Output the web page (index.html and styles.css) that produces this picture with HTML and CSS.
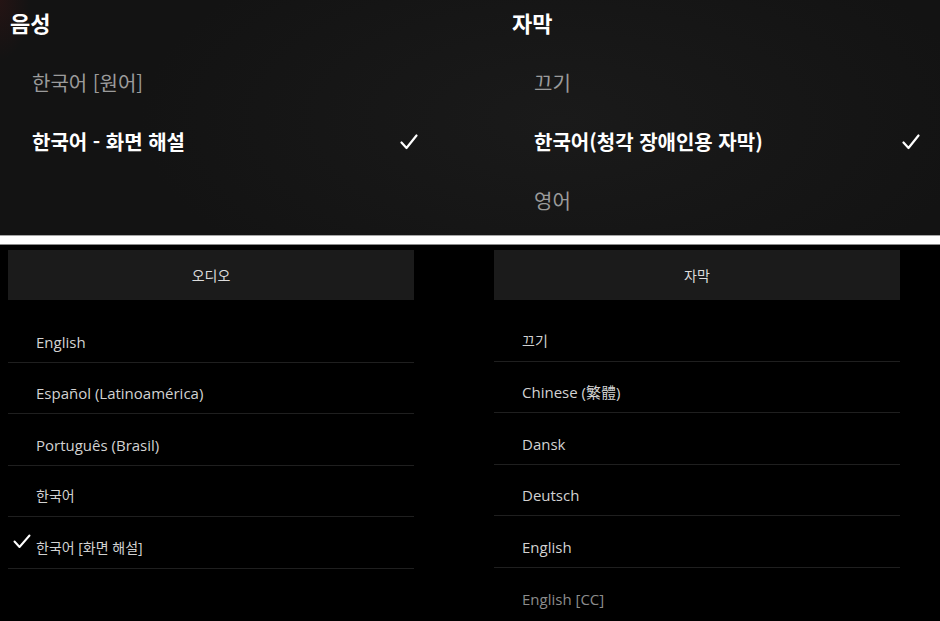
FILE: index.html
```html
<!DOCTYPE html>
<html lang="ko">
<head>
	<meta charset="UTF-8">
	<title>음성 / 자막</title>
	<link rel="stylesheet" href="styles.css">
</head>
<body>
	<section class="player">
		<div class="player_col">
			<h2>음성</h2>
			<ul>
				<li class="dim">한국어 [원어]</li>
				<li class="on">한국어 - 화면 해설
					<svg class="tick" width="18" height="16" viewBox="0 0 18 16"><path d="M1.5 8.5 L6.5 14 L16.5 1.5" fill="none" stroke="#fff" stroke-width="2.2" stroke-linecap="round" stroke-linejoin="round"/></svg>
				</li>
			</ul>
		</div>
		<div class="player_col">
			<h2>자막</h2>
			<ul>
				<li class="dim">끄기</li>
				<li class="on">한국어(청각 장애인용 자막)
					<svg class="tick" width="18" height="16" viewBox="0 0 18 16"><path d="M1.5 8.5 L6.5 14 L16.5 1.5" fill="none" stroke="#fff" stroke-width="2.2" stroke-linecap="round" stroke-linejoin="round"/></svg>
				</li>
				<li class="dim">영어</li>
			</ul>
		</div>
	</section>

	<div class="divider"></div>

	<section class="menu">
		<div class="panel">
			<div class="panel_head"><span class="ko">오디오</span></div>
			<ul>
				<li>English</li>
				<li>Español (Latinoamérica)</li>
				<li>Português (Brasil)</li>
				<li><span class="ko">한국어</span></li>
				<li class="sel">
					<svg class="mark" width="18" height="15" viewBox="0 0 18 15"><path d="M1.5 7.5 L6.5 13 L16.5 1.5" fill="none" stroke="#fff" stroke-width="2" stroke-linecap="round" stroke-linejoin="round"/></svg>
					<span class="ko">한국어 [화면 해설]</span>
				</li>
			</ul>
		</div>
		<div class="panel">
			<div class="panel_head"><span class="ko">자막</span></div>
			<ul class="shift">
				<li><span class="ko">끄기</span></li>
				<li>Chinese (繁體)</li>
				<li>Dansk</li>
				<li>Deutsch</li>
				<li>English</li>
				<li class="grey">English [CC]</li>
			</ul>
		</div>
	</section>
</body>
</html>
```

FILE: styles.css
```css
*{margin:0;padding:0;box-sizing:border-box}
li{list-style: none}
html,body{
	width: 940px;
	height: 621px;
	overflow: hidden;
	background: #000;
}

/* 위쪽: 플레이어 오디오/자막 메뉴 */
.player{
	display: grid;
	grid-template-columns: 502px 502px;
	height: 235px;
	padding-top: 8px;
	background:
		radial-gradient(ellipse 30px 60px at 0 0, rgba(48,20,20,0.6), rgba(48,20,20,0) 100%),
		radial-gradient(ellipse 420px 200px at 560px 120px, #1a1a1a, rgba(26,26,26,0) 100%),
		#131313;
	font-family: "Noto Sans CJK KR", "Noto Sans", sans-serif;
	overflow: hidden;
}
.player_col h2{
	padding-left: 10px;
	font-size: 22px;
	line-height: 28px;
	font-weight: 700;
	color: #fff;
}
.player_col ul{
	margin-top: 17px;
	padding-left: 32px;
	width: 420px;
}
.player_col li{
	display: flex;
	justify-content: space-between;
	align-items: center;
	height: 59px;
	font-size: 20px;
	color: #fff;
}
.player_col li.dim{
	color: #9b9b9b;
}
.player_col li.on{
	font-weight: 700;
}
.player_col .tick{
	margin-right: 2px;
}

.divider{
	height: 10px;
	background: #fff;
	border-top: 1px solid #a5a5a5;
	border-bottom: 1px solid #8a8a8a;
}

/* 아래쪽: 설정 패널 */
.menu{
	display: flex;
	gap: 80px;
	padding: 5px 0 0 8px;
	font-family: "Open Sans", "Noto Sans CJK KR", sans-serif;
	font-size: 15px;
	color: #d2d2d2;
}
.panel{
	width: 406px;
}
.panel_head{
	display: flex;
	justify-content: center;
	align-items: center;
	height: 50px;
	background: #1b1b1b;
	color: #dcdcdc;
}
.panel ul{
	margin-top: 11px;
}
.panel ul.shift{
	margin-top: 10px;
}
.panel li{
	position: relative;
	display: flex;
	align-items: flex-end;
	height: 51.5px;
	padding: 0 0 10px 28px;
	line-height: 20px;
	border-bottom: 1px solid #1f1f1f;
}
.panel li.grey{
	color: #8c8c8c;
	border-bottom: none;
}
.ko{
	font-size: 14px;
}
.panel .mark{
	position: absolute;
	left: 5px;
	top: 17px;
}
```
